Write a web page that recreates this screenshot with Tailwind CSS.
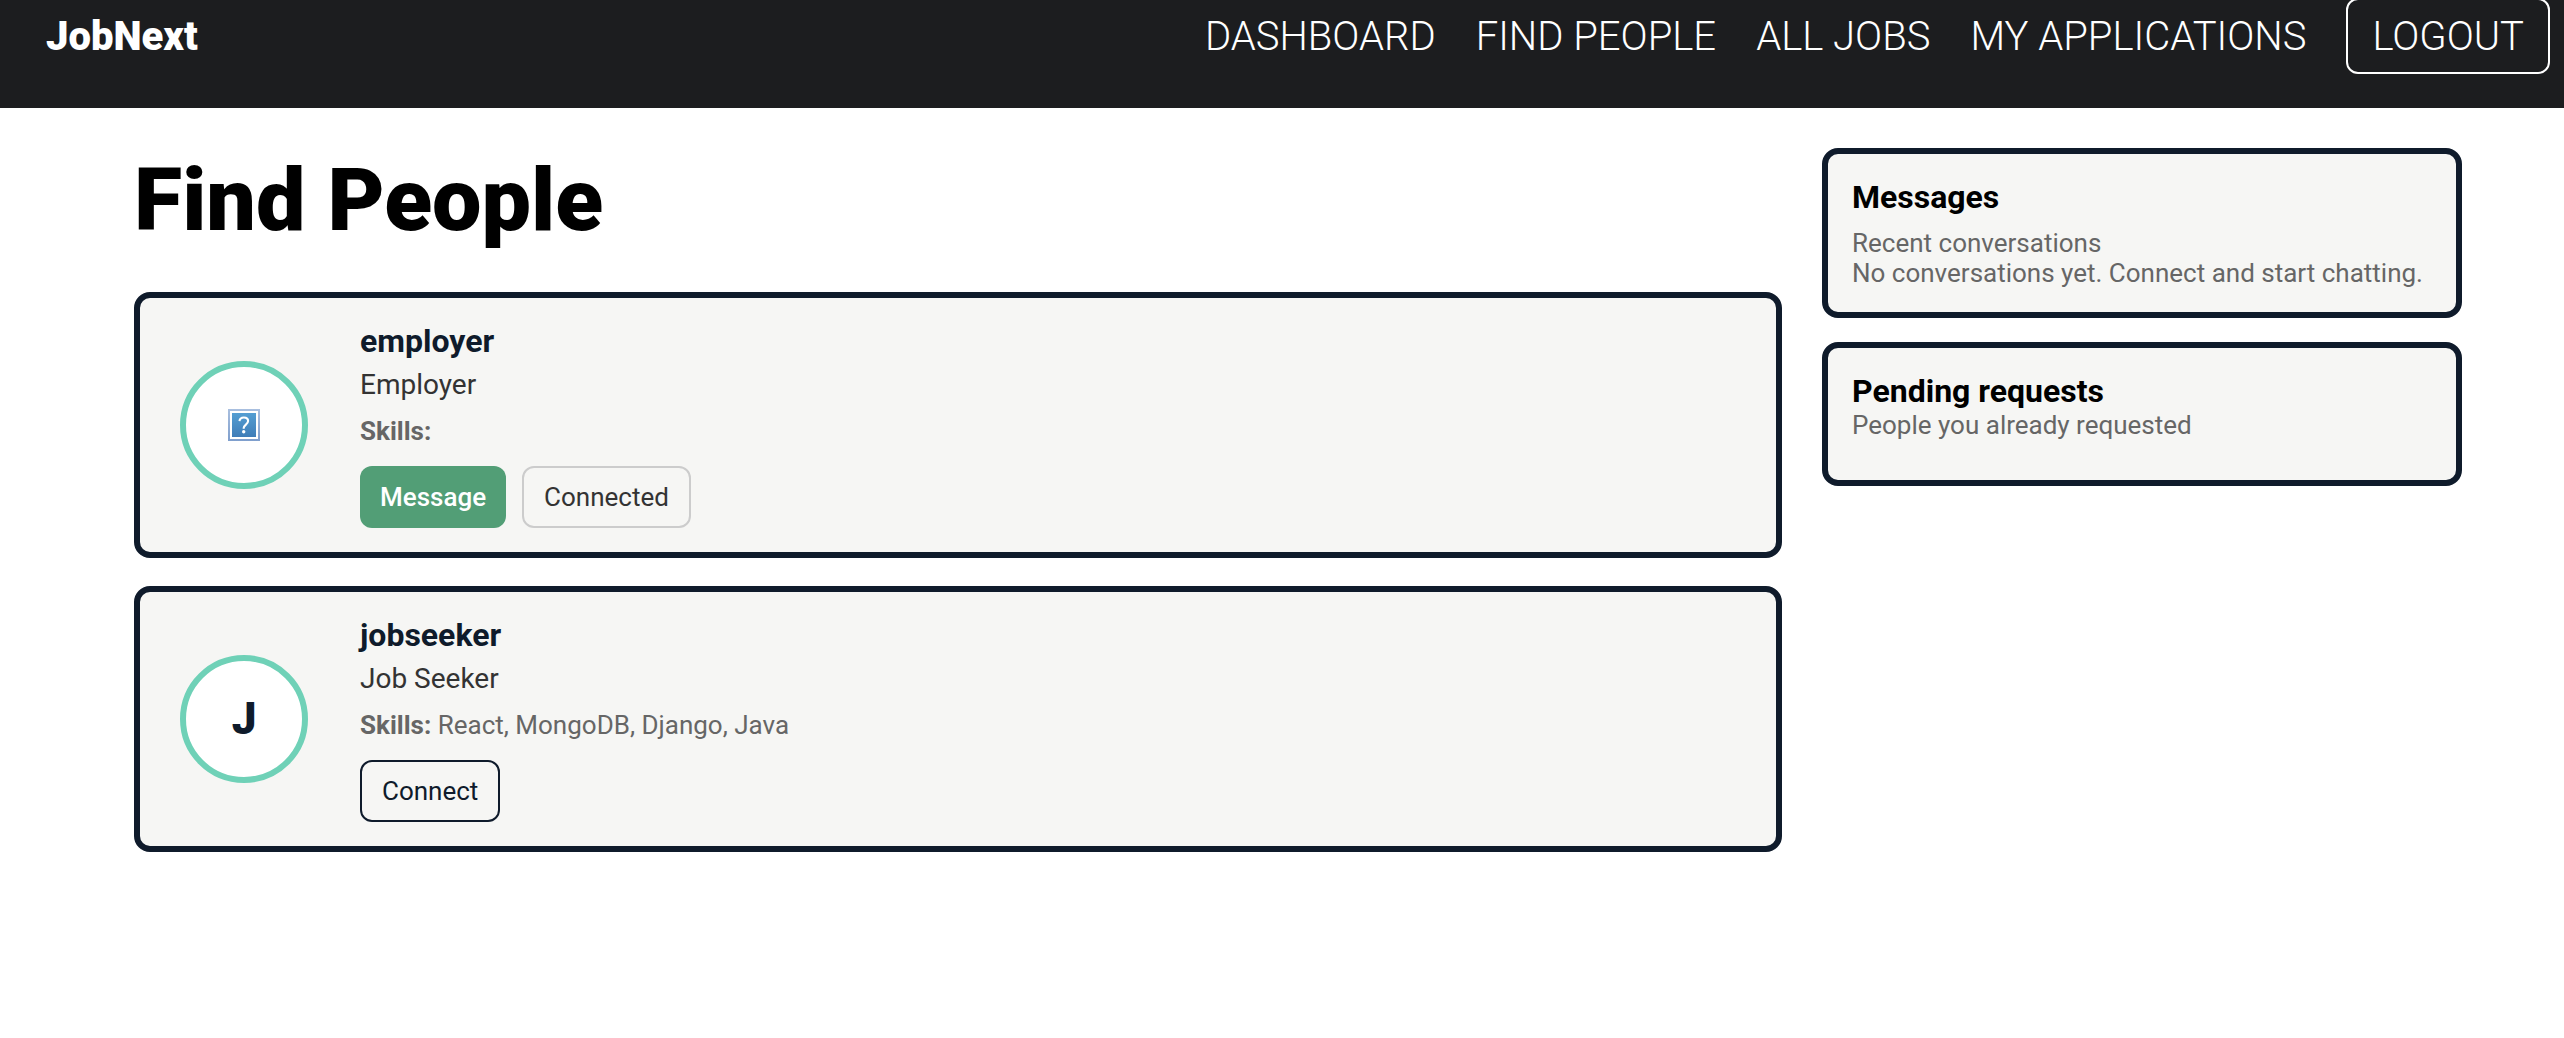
<!DOCTYPE html>
<html lang="en">
<head>
<meta charset="utf-8">
<meta name="viewport" content="width=device-width, initial-scale=1">
<title>JobNext - Find People</title>
<script src="https://cdn.jsdelivr.net/npm/@tailwindcss/browser@4"></script>
</head>
<body class="min-h-screen bg-white font-['Roboto',sans-serif] text-black">
<header class="flex h-[108px] items-start justify-between overflow-hidden bg-[#1c1d1f] pr-[14px] pl-[46px] text-[40px] leading-[48px] text-white">
  <a href="#" class="mt-[13px] font-black">JobNext</a>
  <nav class="-mt-0.5 flex items-baseline gap-10 font-light">
    <a href="#">DASHBOARD</a>
    <a href="#">FIND PEOPLE</a>
    <a href="#">ALL JOBS</a>
    <a href="#">MY APPLICATIONS</a>
    <button type="button" class="rounded-xl border-2 border-white px-6 pt-[13px] pb-[11px]">LOGOUT</button>
  </nav>
</header>
<main class="flex items-start gap-10 pt-10 pr-[102px] pl-[134px]">
  <section class="min-w-0 flex-1">
    <h1 class="mb-10 text-[88px] leading-[104px] font-black">Find People</h1>
    <div class="flex flex-col gap-7">
      <article class="flex items-center gap-[52px] rounded-2xl border-6 border-[#0f1b2b] bg-[#f6f6f4] px-10 py-6">
        <div class="flex size-32 shrink-0 items-center justify-center rounded-full border-6 border-[#6fd1b7] bg-white">
          <svg class="size-8" viewBox="0 0 32 32" role="img" aria-label="Missing photo">
            <defs>
              <linearGradient id="frame" x1="0" y1="0" x2="0" y2="1"><stop offset="0" stop-color="#a9bfdf"/><stop offset="1" stop-color="#7f9fcd"/></linearGradient>
              <linearGradient id="fill" x1="0" y1="0" x2="0" y2="1"><stop offset="0" stop-color="#549ed2"/><stop offset="1" stop-color="#3f7db8"/></linearGradient>
            </defs>
            <rect width="32" height="32" fill="url(#frame)"/>
            <rect x="2" y="2" width="28" height="28" fill="#fff"/>
            <rect x="4" y="4" width="24" height="24" fill="url(#fill)"/>
            <path d="M11.500 12.200C11.700 9.800 13.400 8.500 15.900 8.500c2.500 0 4.200 1.400 4.200 3.600 0 3.300-4.400 3.700-4.400 7v.7" fill="none" stroke="#fff" stroke-width="2.100"/>
            <circle cx="15.700" cy="22.700" r="1.700" fill="#fff"/>
          </svg>
        </div>
        <div>
          <h2 class="text-[32px] leading-[38px] font-bold text-[#0f1b2b]">employer</h2>
          <p class="mt-2 text-[28px] leading-[34px] text-[#333]">Employer</p>
          <p class="mt-3.5 text-[26px] leading-[30px] text-[#666]"><strong>Skills:</strong></p>
          <div class="mt-5 flex gap-4 text-[26px] leading-[30px]">
            <button type="button" class="rounded-xl bg-[#529e76] px-5 py-4 font-medium text-white">Message</button>
            <button type="button" class="rounded-xl border-2 border-[#ccc] px-5 py-3.5 text-[#333]">Connected</button>
          </div>
        </div>
      </article>
      <article class="flex items-center gap-[52px] rounded-2xl border-6 border-[#0f1b2b] bg-[#f6f6f4] px-10 py-6">
        <div class="flex size-32 shrink-0 items-center justify-center rounded-full border-6 border-[#6fd1b7] bg-white text-[44px] leading-[52px] font-black text-[#0f1b2b]">J</div>
        <div>
          <h2 class="text-[32px] leading-[38px] font-bold text-[#0f1b2b]">jobseeker</h2>
          <p class="mt-2 text-[28px] leading-[34px] text-[#333]">Job Seeker</p>
          <p class="mt-3.5 text-[26px] leading-[30px] text-[#666]"><strong>Skills:</strong> React, MongoDB, Django, Java</p>
          <div class="mt-5 flex gap-4 text-[26px] leading-[30px]">
            <button type="button" class="rounded-xl border-2 border-[#0f1b2b] px-5 py-3.5 text-[#0f1b2b]">Connect</button>
          </div>
        </div>
      </article>
    </div>
  </section>
  <aside class="flex w-[640px] shrink-0 flex-col gap-6">
    <section class="rounded-2xl border-6 border-[#0f1b2b] bg-[#f6f6f4] p-6">
      <h2 class="text-[32px] leading-[38px] font-bold">Messages</h2>
      <p class="mt-3 text-[26px] leading-[30px] text-[#666]">Recent conversations</p>
      <p class="text-[26px] leading-[30px] text-[#666]">No conversations yet. Connect and start chatting.</p>
    </section>
    <section class="rounded-2xl border-6 border-[#0f1b2b] bg-[#f6f6f4] px-6 pt-6 pb-10">
      <h2 class="text-[32px] leading-[38px] font-bold">Pending requests</h2>
      <p class="text-[26px] leading-[30px] text-[#666]">People you already requested</p>
    </section>
  </aside>
</main>
</body>
</html>
